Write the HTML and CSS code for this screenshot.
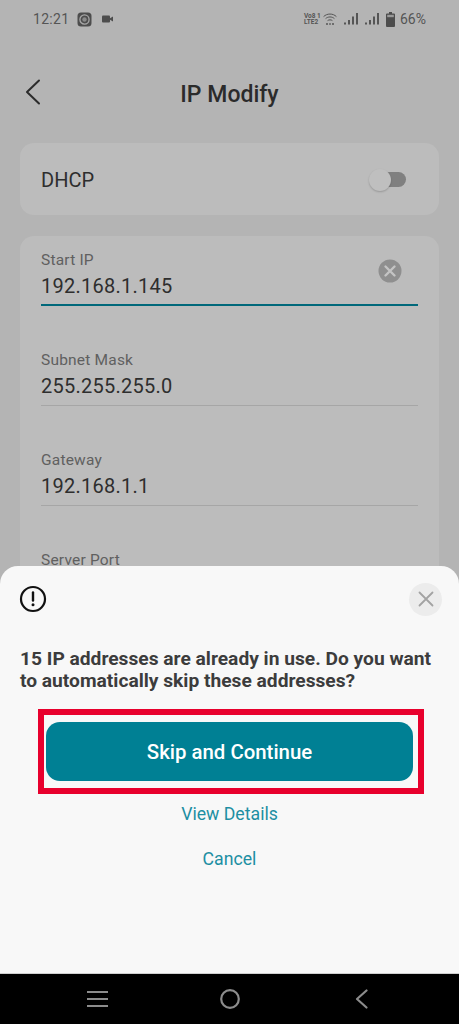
FILE: index.html
```html
<!DOCTYPE html>
<html lang="en">
<head>
    <meta charset="UTF-8">
    <meta name="viewport" content="width=device-width, initial-scale=1.0">
    <title>IP Modify</title>
    <link rel="stylesheet" href="styles.css">
</head>
<body>
<div class="screen">
    <div class="main">
        <div class="status-bar">
            <div class="status-left">
                <span class="time">12:21</span>
                <svg class="ic-app" width="15" height="15" viewBox="0 0 15 15">
                    <rect x="0.5" y="0.5" width="14" height="14" rx="3.5" fill="#4d4d4d"/>
                    <circle cx="7.5" cy="7.5" r="4.6" fill="none" stroke="#a8a8a8" stroke-width="1.3"/>
                    <circle cx="7.5" cy="7.5" r="2.2" fill="#8a8a8a"/>
                </svg>
                <svg class="ic-video" width="11" height="8" viewBox="0 0 11 8">
                    <rect x="0" y="0.5" width="8" height="7" rx="1" fill="#4d4d4d"/>
                    <path d="M8 3.2 L11 1.5 V6.5 L8 4.8 Z" fill="#4d4d4d"/>
                </svg>
            </div>
            <div class="status-right">
                <span class="volte">Vo8 1<br>LTE2</span>
                <svg class="ic-wifi" width="14" height="12" viewBox="0 0 14 12" fill="none" stroke="#555" stroke-width="1">
                    <path d="M0.6 3.6 C4 0.2 10 0.2 13.4 3.6"/>
                    <path d="M2.6 5.6 C5 3.4 9 3.4 11.4 5.6"/>
                    <path d="M4.6 7.6 C6 6.6 8 6.6 9.4 7.6"/>
                    <path d="M3 11 H5 M6.2 11 H7.8 M9 11 H11" stroke-width="1.4"/>
                </svg>
                <svg class="ic-signal" width="14" height="12" viewBox="0 0 14 12" fill="#555">
                    <rect x="0" y="9.5" width="2" height="2"/>
                    <rect x="4" y="7" width="2" height="4.5"/>
                    <rect x="8" y="3.5" width="2" height="8"/>
                    <rect x="12" y="0" width="2" height="11.5"/>
                </svg>
                <svg class="ic-signal" width="14" height="12" viewBox="0 0 14 12" fill="#555">
                    <rect x="0" y="9.5" width="2" height="2"/>
                    <rect x="4" y="7" width="2" height="4.5"/>
                    <rect x="8" y="3.5" width="2" height="8"/>
                    <rect x="12" y="0" width="2" height="11.5"/>
                </svg>
                <svg class="ic-battery" width="9" height="15" viewBox="0 0 9 15">
                    <path d="M3 0 H6 V1.5 H8 A1 1 0 0 1 9 2.5 V14 A1 1 0 0 1 8 15 H1 A1 1 0 0 1 0 14 V2.5 A1 1 0 0 1 1 1.5 H3 Z" fill="#4d4d4d"/>
                    <rect x="1.2" y="2.8" width="6.6" height="2.4" fill="#9a9a9a"/>
                </svg>
                <span class="percent">66%</span>
            </div>
        </div>

        <div class="header">
            <svg class="back" width="16" height="26" viewBox="0 0 16 26" fill="none" stroke="#2b2b2b" stroke-width="2" stroke-linecap="round" stroke-linejoin="round">
                <path d="M14 1.5 L2 13 L14 24.5"/>
            </svg>
            <h1>IP Modify</h1>
        </div>

        <div class="card dhcp">
            <span>DHCP</span>
            <div class="toggle"><div class="knob"></div></div>
        </div>

        <div class="card fields">
            <div class="field active">
                <label>Start IP</label>
                <div class="value">192.168.1.145</div>
                <svg class="clear" width="24" height="24" viewBox="0 0 24 24">
                    <circle cx="12" cy="12" r="11.5" fill="#8f8f8f"/>
                    <path d="M7.5 7.5 L16.5 16.5 M16.5 7.5 L7.5 16.5" stroke="#c4c4c4" stroke-width="2.4" stroke-linecap="round"/>
                </svg>
            </div>
            <div class="field">
                <label>Subnet Mask</label>
                <div class="value">255.255.255.0</div>
            </div>
            <div class="field">
                <label>Gateway</label>
                <div class="value">192.168.1.1</div>
            </div>
            <div class="field">
                <label>Server Port</label>
            </div>
        </div>
    </div>

    <!-- bottom sheet sits over the form -->
    <div class="sheet">
        <div class="sheet-top">
            <svg class="alert" width="28" height="28" viewBox="0 0 28 28" fill="none">
                <circle cx="14" cy="14" r="12" stroke="#111" stroke-width="2.2"/>
                <path d="M14 7.5 V15.5" stroke="#111" stroke-width="2.4" stroke-linecap="round"/>
                <circle cx="14" cy="19.8" r="1.5" fill="#111"/>
            </svg>
            <div class="close">
                <svg width="16" height="16" viewBox="0 0 16 16" stroke="#a3a3a3" stroke-width="1.8" stroke-linecap="round">
                    <path d="M1.5 1.5 L14.5 14.5 M14.5 1.5 L1.5 14.5"/>
                </svg>
            </div>
        </div>
        <p class="message">15 IP addresses are already in use. Do you want to automatically skip these addresses?</p>
        <div class="highlight">
            <button class="primary">Skip and Continue</button>
        </div>
        <a class="link">View Details</a>
        <a class="link">Cancel</a>
    </div>

    <div class="nav">
        <svg width="21" height="18" viewBox="0 0 21 18" stroke="#8c8c8c" stroke-width="2.2">
            <path d="M0 2 H21 M0 9 H21 M0 16 H21"/>
        </svg>
        <svg width="20" height="20" viewBox="0 0 20 20" fill="none" stroke="#8c8c8c" stroke-width="2.2">
            <circle cx="10" cy="10" r="8.8"/>
        </svg>
        <svg width="13" height="20" viewBox="0 0 13 20" fill="none" stroke="#8c8c8c" stroke-width="2.2" stroke-linecap="round" stroke-linejoin="round">
            <path d="M11.5 1.5 L2 10 L11.5 18.5"/>
        </svg>
    </div>
</div>
</body>
</html>
```

FILE: styles.css
```css
* {
    box-sizing: border-box;
}
body {
    margin: 0;
    font-family: Roboto, "Liberation Sans", sans-serif;
    background-color: #000;
}
.screen {
    position: relative;
    width: 459px;
    height: 1024px;
    overflow: hidden;
    display: flex;
    flex-direction: column;
}
.main {
    flex: 1;
    min-height: 0;
    overflow: hidden;
    background-color: #b4b4b4;
}

/* status bar */
.status-bar {
    height: 38px;
    padding: 0 33px;
    display: flex;
    justify-content: space-between;
    align-items: center;
    color: #555;
}
.status-left,
.status-right {
    display: flex;
    align-items: center;
}
.time {
    font-size: 14px;
    letter-spacing: 0.3px;
}
.ic-app {
    margin-left: 8px;
}
.ic-video {
    margin-left: 10px;
}
.volte {
    font-size: 6.5px;
    line-height: 6.5px;
    font-weight: 700;
    width: 17px;
    white-space: nowrap;
}
.ic-wifi {
    margin-left: 2px;
}
.ic-signal {
    margin-left: 7px;
}
.ic-battery {
    margin-left: 7px;
}
.percent {
    font-size: 14px;
    margin-left: 5px;
}

/* header */
.header {
    height: 105px;
    padding-top: 7px;
    position: relative;
    display: flex;
    justify-content: center;
    align-items: center;
}
.header h1 {
    margin: 0;
    font-size: 23px;
    font-weight: 500;
    color: #2b2b2b;
}
.back {
    position: absolute;
    left: 25px;
    top: 41px;
}

/* cards */
.card {
    margin: 0 20px;
    background-color: #bcbcbc;
    border-radius: 14px;
}
.dhcp {
    height: 72px;
    padding: 1px 33px 0 21px;
    display: flex;
    justify-content: space-between;
    align-items: center;
    font-size: 20px;
    color: #2e2e2e;
}
.toggle {
    width: 35px;
    height: 15px;
    border-radius: 8px;
    background-color: #808080;
    position: relative;
}
.knob {
    position: absolute;
    left: -2px;
    top: -3px;
    width: 22px;
    height: 22px;
    border-radius: 50%;
    background-color: #bfbfbf;
    box-shadow: 0 1px 2px rgba(0, 0, 0, 0.2);
}
.fields {
    margin-top: 21px;
    padding: 16px 21px 30px 21px;
}
.field {
    position: relative;
    height: 100px;
    padding-top: 46px;
    border-bottom: 1px solid #a6a6a6;
}
.field.active {
    height: 54px;
    padding-top: 0;
    border-bottom: 2px solid #00687a;
}
.field label {
    display: block;
    font-size: 15.5px;
    line-height: 16px;
    letter-spacing: 0.2px;
    color: #606060;
}
.value {
    margin-top: 4px;
    font-size: 20px;
    line-height: 28px;
    letter-spacing: 0.25px;
    color: #2e2e2e;
}
.clear {
    position: absolute;
    right: 16px;
    top: 7px;
}

/* bottom sheet */
.sheet {
    position: absolute;
    left: 0;
    right: 0;
    bottom: 50px;
    height: 408px;
    background-color: #f8f8f8;
    border-bottom: 1px solid #cfcfcf;
    border-radius: 18px 18px 0 0;
    padding: 17px 17px 0 20px;
    display: flex;
    flex-direction: column;
    align-items: center;
}
.sheet-top {
    width: 100%;
    height: 32px;
    display: flex;
    justify-content: space-between;
    align-items: center;
}
.alert {
    margin-left: -1px;
}
.close {
    width: 33px;
    height: 33px;
    border-radius: 50%;
    background-color: #ececec;
    display: flex;
    justify-content: center;
    align-items: center;
}
.message {
    margin: 33px 0 0;
    width: 100%;
    font-size: 19.2px;
    line-height: 22px;
    font-weight: 700;
    color: #3c3c3c;
}
.highlight {
    margin: 17px 0 0 18px;
    align-self: flex-start;
    width: 386px;
    height: 85px;
    border: 6px solid #e8002d;
    padding: 7px 5px 7px 2px;
}
.primary {
    display: block;
    width: 100%;
    height: 59px;
    border: 0;
    border-radius: 14px;
    background-color: #008094;
    color: #fff;
    font-family: inherit;
    font-size: 20.4px;
    font-weight: 500;
}
.link {
    margin-left: -3px;
    font-size: 17.7px;
    line-height: 22px;
    color: #1d8fa3;
}
.highlight + .link {
    margin-top: 8.5px;
}
.link + .link {
    margin-top: 23px;
}

/* nav bar */
.nav {
    height: 50px;
    flex-shrink: 0;
    background-color: #000;
    display: grid;
    grid-template-columns: repeat(3, 132px);
    justify-content: center;
    justify-items: center;
    align-items: center;
}
```
